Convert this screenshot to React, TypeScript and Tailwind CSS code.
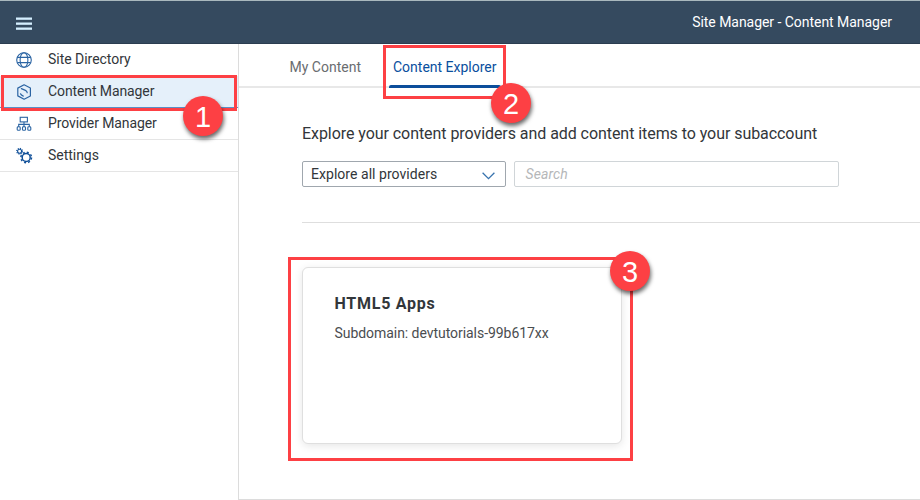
import React from "react";

const stroke = { fill: "none", stroke: "#2b64a3", strokeWidth: 1.2 } as const;

function GlobeIcon() {
  return (
    <svg width="16" height="16" viewBox="0 0 16 16" {...stroke} strokeWidth={1.1}>
      <circle cx="8" cy="8" r="7.3" />
      <ellipse cx="8" cy="8" rx="3.9" ry="7.3" />
      <path d="M1.3 5.4h13.4M1.3 10.6h13.4" />
    </svg>
  );
}

function ContentIcon() {
  return (
    <svg width="16" height="16" viewBox="0 0 16 16" {...stroke} strokeLinejoin="round" strokeLinecap="round">
      <path d="M8.1.8l6.3 3.2v8l-6.3 3.2-6.3-3.3V4.1z" />
      <path d="M5.4 4.6 9.4 6.4c1.1.5 1.7 1.2 1.8 2.3" />
      <path d="M4.5 9.8c.4 1.1 1.3 1.8 2.8 2.3" />
    </svg>
  );
}

function ProviderIcon() {
  return (
    <svg width="16" height="16" viewBox="0 0 16 16" {...stroke} strokeWidth={1.1}>
      <rect x="4.2" y="1.3" width="7.2" height="4.6" />
      <path d="M8 5.9v5M2.7 10.7V8.4h10.6v2.3" />
      <rect x="1.2" y="10.8" width="3" height="3.5" rx=".9" />
      <rect x="6.5" y="10.8" width="3" height="3.5" rx=".9" />
      <rect x="11.8" y="10.8" width="3" height="3.5" rx=".9" />
    </svg>
  );
}

function SettingsIcon() {
  return (
    <svg width="18" height="18" viewBox="0 0 18 18" fill="none" stroke="#0f4f98">
      <circle cx="3.6" cy="4.2" r="2" strokeWidth="1.1" />
      <circle cx="3.6" cy="4.2" r="2.9" strokeWidth="1.1" strokeDasharray="1.1 1.178" />
      <circle cx="10.2" cy="10.5" r="4" strokeWidth="1.5" />
      <circle cx="10.2" cy="10.5" r="5.3" strokeWidth="1.5" strokeDasharray="2 2.163" />
    </svg>
  );
}

const items = [
  { label: "Site Directory", icon: <GlobeIcon />, row: "h-8" },
  { label: "Content Manager", icon: <ContentIcon />, row: "h-8 bg-[#e5f0fa] border-b border-[#5a8fc4]" },
  { label: "Provider Manager", icon: <ProviderIcon />, row: "h-8 border-b border-[#e5e5e5]" },
  { label: "Settings", icon: <SettingsIcon />, row: "h-8 border-b border-[#e5e5e5]" },
];

function Badge({ n, place }: { n: number; place: string }) {
  return (
    <span
      className={`absolute z-10 flex size-10 items-center justify-center rounded-full bg-[#fd4044] pt-0.5 font-['Liberation_Sans',sans-serif] text-[29px] leading-none text-white shadow-[1px_3px_4px_rgba(0,0,0,0.6)] ${place}`}
    >
      {n}
    </span>
  );
}

export default function App() {
  return (
    <div className="relative flex h-[500px] w-[920px] flex-col overflow-hidden bg-white font-[Roboto,sans-serif] text-sm text-[#32363a]">
      <header className="flex h-11 shrink-0 items-center justify-between border-t border-b border-t-[#a9b8bd] border-b-[#2b3d50] bg-[#354a5f] pr-7 pl-4 text-white">
        <svg width="16" height="14" viewBox="0 0 16 14" fill="#d5efff" className="mt-[3px]">
          <rect y="0.5" width="16" height="2.3" />
          <rect y="5.5" width="16" height="2.3" />
          <rect y="10.5" width="16" height="2.3" />
        </svg>
        <span className="tracking-[-0.04px]">Site Manager - Content Manager</span>
      </header>

      <div className="flex min-h-0 flex-1">
        <nav className="w-[238px] shrink-0">
          {items.map((it) => (
            <div key={it.label} className={`flex items-center pl-4 ${it.row}`}>
              <span className="flex w-8 items-center">{it.icon}</span>
              <span className={`pb-0.5 ${it.label.includes("Manager") ? "tracking-[-0.1px]" : "tracking-[-0.03px]"}`}>
                {it.label}
              </span>
            </div>
          ))}
        </nav>

        <main className="min-w-0 flex-1 border-b border-l border-[#dcdcdc]">
          <div className="flex h-11 items-stretch border-b-2 border-[#e8e8e8] pl-[50.5px]">
            <span className="flex items-center pt-[3px] text-[#6a6d70]">My Content</span>
            <span className="relative ml-8 flex items-center pt-[3px] text-[#0a4f9e]">
              Content Explorer
              <i className="absolute -right-1 -bottom-0.5 -left-1 h-[3px] rounded-t-[2px] bg-[#0c4e9b]" />
            </span>
          </div>

          <section className="pl-[63px]">
            <h1 className="mt-[34px] text-base leading-6 font-normal tracking-[-0.06px]">
              Explore your content providers and add content items to your subaccount
            </h1>
            <div className="mt-[15px] flex gap-2">
              <div className="flex h-[26px] w-[204px] items-center justify-between rounded-[2px] border border-[#a0a7ae] pr-2.5 pl-2">
                <span className="tracking-[0.04px]">Explore all providers</span>
                <svg width="13" height="8" viewBox="0 0 13 8" fill="none" stroke="#3873ae" strokeWidth="1.3" className="mt-[3px]">
                  <path d="M.6 .8 6.5 6.7 12.4 .8" />
                </svg>
              </div>
              <div className="flex h-[26px] w-[325px] items-center rounded-[2px] border border-[#d0d5d8] pl-[10.5px] tracking-[0.1px] text-[#b5b7b9] italic">
                Search
              </div>
            </div>
            <hr className="mt-[35px] border-t border-[#dedede]" />
            <article className="mt-11 h-[177px] w-80 rounded-md border border-[#dfdfdf] bg-white px-[31.5px] pt-[26px] shadow-[0_2px_8px_rgba(0,0,0,0.1)]">
              <h2 className="text-base leading-5 font-bold tracking-[0.75px]">HTML5 Apps</h2>
              <p className="mt-[9px] leading-5 tracking-[-0.05px] text-[#4a4d50]">Subdomain: devtutorials-99b617xx</p>
            </article>
          </section>
        </main>
      </div>

      <div className="absolute top-[75px] left-px h-9 w-[236px] border-3 border-[#fd4044]" />
      <div className="absolute top-[45px] left-[383px] h-[54px] w-[123px] border-3 border-[#fd4044]" />
      <div className="absolute top-[257px] left-[288px] h-[204px] w-[345px] border-3 border-[#fd4044]" />
      <Badge n={1} place="left-[183px] top-24" />
      <Badge n={2} place="left-[491px] top-[83px]" />
      <Badge n={3} place="left-[610px] top-[251px]" />
    </div>
  );
}
